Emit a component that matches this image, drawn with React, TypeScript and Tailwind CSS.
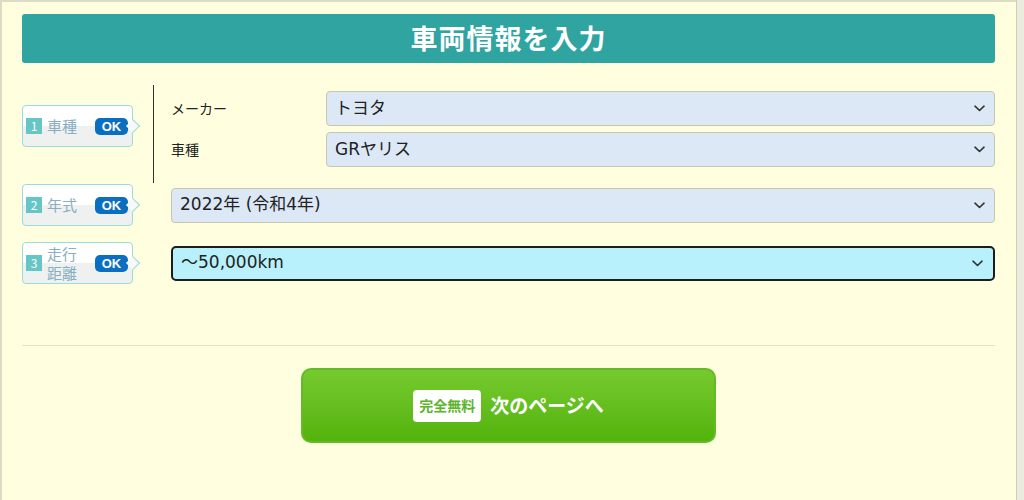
import React from 'react';

const jp = { fontFamily: '"Noto Sans CJK JP", "Noto Sans", sans-serif' };
const selectFont = { fontFamily: '"DejaVu Sans", "Noto Sans CJK JP", sans-serif' };

function Chevron() {
  return (
    <svg width="11" height="7" viewBox="0 0 11 7" fill="none" className="shrink-0">
      <path d="M1 1.2 L5.5 5.5 L10 1.2" stroke="#333" strokeWidth="1.6" strokeLinecap="round" strokeLinejoin="round" />
    </svg>
  );
}

function Select({ value, active = false }: { value: string; active?: boolean }) {
  return (
    <div
      className={
        active
          ? 'flex-1 h-[35px] flex items-center justify-between pl-[8px] pr-[10px] rounded-[5px] border-2 border-[#1c1c1c] bg-[#b8f0fb] text-[17px] text-[#222]'
          : 'flex-1 h-[35px] flex items-center justify-between pl-[8px] pr-[9px] rounded-[4px] border border-[#c5c8ad] bg-[#dce8f6] text-[17px] text-[#222]'
      }
    >
      <span style={selectFont}>{value}</span>
      <Chevron />
    </div>
  );
}

function StepTab({ num, label }: { num: string; label: React.ReactNode }) {
  return (
    <div className="w-[131px] shrink-0">
      <div className="relative w-[111px] h-[42px] rounded-[4px] border-[1.5px] border-[#98dcdc] bg-gradient-to-b from-white from-50% to-[#eef1f0] to-50% flex items-center justify-between pl-[3px] pr-[4px]">
        <div className="flex items-center gap-[5px]">
          <span className="w-[16px] h-[16px] bg-[#66c6c6] text-white text-[12px] leading-none flex items-center justify-center">
            {num}
          </span>
          <span className="text-[#88aec0] text-[15px] leading-[18px]">{label}</span>
        </div>
        <span
          className="w-[33px] h-[17px] rounded-[5px] bg-[#0b6fc1] text-white text-[13px] font-bold leading-none flex items-center justify-center"
          style={{ fontFamily: '"Liberation Sans", Arial, sans-serif' }}
        >
          OK
        </span>
        <span className="absolute right-[-6px] top-[15px] w-[10px] h-[10px] rotate-45 border-t-[1.5px] border-r-[1.5px] border-[#98dcdc] bg-[#f7f8f7]" />
      </div>
    </div>
  );
}

export default function App() {
  return (
    <div className="w-[1024px] h-[500px] flex bg-[#ffffe0] overflow-hidden" style={jp}>
      <div className="w-[1016px] h-full border-l-2 border-t-2 border-[#dcdcc6] pl-[20px] pr-[21px] pt-[12px]">
        {/* Heading */}
        <div className="h-[49px] rounded-[3px] bg-[#2fa4a1] flex items-center justify-center">
          <h1 className="text-white text-[27px] font-bold tracking-[1px]">車両情報を入力</h1>
        </div>

        {/* Step 1 */}
        <div className="flex mt-[22px]">
          <div className="mt-[20px]">
            <StepTab num="1" label="車種" />
          </div>
          <div className="flex-1 border-l border-[#333] pl-[17px] pt-[6px] pb-[16px] flex flex-col gap-[6px]">
            <div className="flex items-center">
              <span className="w-[155px] text-[14px] text-[#222]">メーカー</span>
              <Select value="トヨタ" />
            </div>
            <div className="flex items-center">
              <span className="w-[155px] text-[14px] text-[#222]">車種</span>
              <Select value="GRヤリス" />
            </div>
          </div>
        </div>

        {/* Step 2 */}
        <div className="flex items-center mt-[1px]">
          <StepTab num="2" label="年式" />
          <div className="flex-1 pl-[18px] flex">
            <Select value="2022年 (令和4年)" />
          </div>
        </div>

        {/* Step 3 */}
        <div className="flex items-center mt-[16px]">
          <StepTab
            num="3"
            label={
              <span className="flex flex-col leading-[19px]">
                <span>走行</span>
                <span>距離</span>
              </span>
            }
          />
          <div className="flex-1 pl-[18px] flex">
            <Select value="～50,000km" active />
          </div>
        </div>

        <div className="mt-[61px] h-px bg-[#e2e2cc]" />

        <div className="flex justify-center mt-[22px]">
          <button className="w-[415px] h-[75px] rounded-[10px] border-2 border-[#62bb2a] bg-gradient-to-b from-[#76ca2d] to-[#53b30a] flex items-center justify-center gap-[9px]">
            <span className="w-[68px] h-[32px] rounded-[4px] bg-white text-[#5bb52a] text-[14px] font-bold flex items-center justify-center">
              完全無料
            </span>
            <span className="text-white text-[19px] font-bold">次のページへ</span>
          </button>
        </div>
      </div>
      <div className="flex-1 h-full border-l border-[#cfcfc0] bg-[#ececde]" />
    </div>
  );
}
